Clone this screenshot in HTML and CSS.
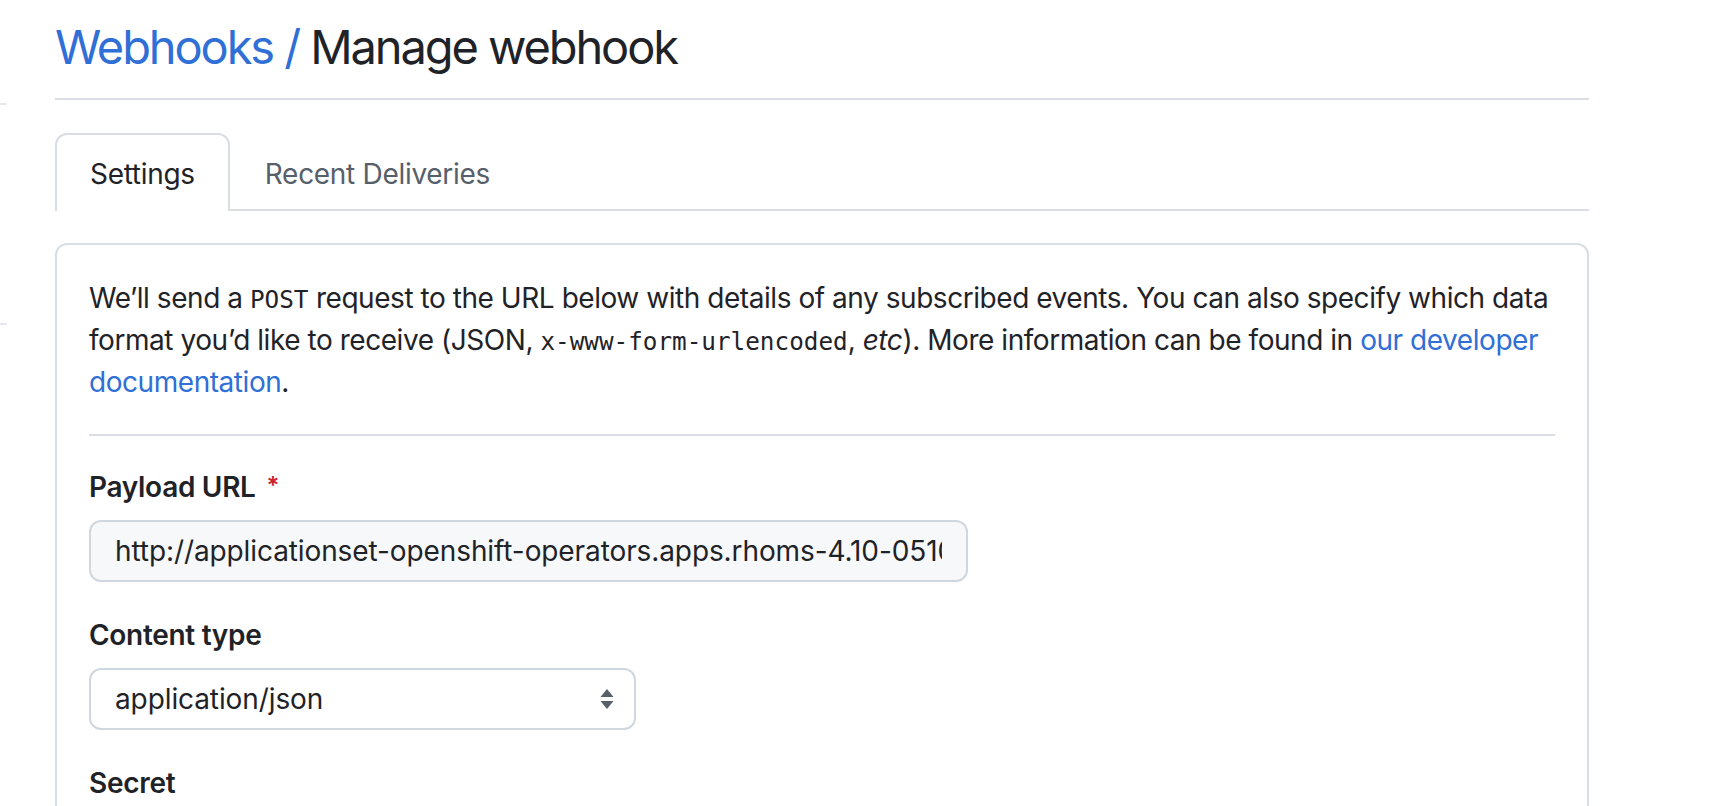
FILE: index.html
```html
<!DOCTYPE html>
<html lang="en">
<head>
<meta charset="utf-8">
<title>Manage webhook</title>
<link rel="stylesheet" href="styles.css">
</head>
<body>
<div class="page">
  <div class="side">
    <span class="side-mark mark-top"></span>
    <span class="side-mark mark-bottom"></span>
  </div>
  <main class="main">
    <div class="subhead">
      <h2 class="subhead-heading"><a class="crumb" href="#">Webhooks</a><span class="crumb-sep"> / </span>Manage webhook</h2>
    </div>
    <nav class="tabnav">
      <a class="tab tab-selected" href="#">Settings</a>
      <a class="tab" href="#">Recent Deliveries</a>
    </nav>
    <section class="box">
      <p class="intro">We’ll send a <code>POST</code> request to the URL below with details of any subscribed events. You can also specify which data format you’d like to receive (JSON, <code>x-www-form-urlencoded</code>, <em>etc</em>). More information can be found in <a href="#" class="link">our developer documentation</a>.</p>
      <hr class="divider">
      <div class="field">
        <label class="label">Payload URL <span class="req">*</span></label>
        <div class="input input-url"><span class="input-text">http://applicationset-openshift-operators.apps.rhoms-4.10-051022-aws-x.example.com/api/webhook</span></div>
      </div>
      <div class="field">
        <label class="label">Content type</label>
        <div class="input select"><span class="input-text">application/json</span>
          <svg class="select-arrows" width="16" height="24" viewBox="0 0 16 24"><path d="M8 2 L14.5 10 H1.5 Z M8 22 L1.5 14 H14.5 Z" fill="#57606a"/></svg>
        </div>
      </div>
      <div class="field">
        <label class="label">Secret</label>
      </div>
    </section>
  </main>
</div>
</body>
</html>
```
FILE: styles.css
```css
html, body {
  margin: 0;
  padding: 0;
  background: #ffffff;
  color: #1f2328;
  font-family: Inter, "Liberation Sans", Arial, sans-serif;
  overflow: hidden;
}
.page {
  display: flex;
  height: 806px;
  overflow: hidden;
}
.side {
  width: 55px;
  flex: none;
  display: flex;
  flex-direction: column;
}
.side-mark {
  display: block;
  width: 7px;
  height: 2px;
  background: #e6e9ed;
}
.mark-top { margin-top: 103px; }
.mark-bottom { margin-top: 218px; }
.main {
  width: 1534px;
  flex: none;
}
.subhead {
  border-bottom: 2px solid #d8dee4;
  padding: 17px 0 21px;
}
.subhead-heading {
  margin: 0;
  font-size: 47px;
  font-weight: 400;
  line-height: 60px;
  letter-spacing: -2.1px;
}
.crumb { color: #2f6fd6; text-decoration: none; }
.crumb-sep { color: #2f6fd6; }
.tabnav {
  margin-top: 33px;
  display: flex;
  border-bottom: 2px solid #d8dee4;
  height: 76px;
}
.tab {
  display: flex;
  align-items: center;
  padding: 2px 33px 0;
  font-size: 28px;
  letter-spacing: -0.3px;
  color: #57606a;
  text-decoration: none;
  border: 2px solid transparent;
  border-bottom: none;
  border-radius: 12px 12px 0 0;
  margin-bottom: -2px;
}
.tab-selected {
  color: #1f2328;
  border-color: #d8dee4;
  background: #ffffff;
}
.box {
  margin-top: 32px;
  border: 2px solid #d8dee4;
  border-bottom: none;
  border-radius: 12px 12px 0 0;
  padding: 32px 32px 0;
  height: 600px;
}
.intro {
  margin: 0;
  font-size: 28px;
  line-height: 42px;
  letter-spacing: -0.45px;
}
code {
  font-family: "DejaVu Sans Mono", "Liberation Mono", monospace;
  font-size: 24.3px;
  line-height: 1;
  letter-spacing: 0;
}
.link { color: #2f6fd6; text-decoration: none; }
.divider {
  margin: 31px 0 0;
  border: none;
  border-top: 2px solid #d8dee4;
  height: 0;
}
.field {
  margin-top: 30px;
}
.field + .field { margin-top: 32px; }
.label {
  display: block;
  font-size: 28px;
  line-height: 42px;
  font-weight: 600;
  letter-spacing: -0.3px;
}
.req { color: #cf222e; font-size: 24px; vertical-align: 3px; line-height: 1; margin-left: 4px; }
.input {
  margin-top: 12px;
  box-sizing: border-box;
  height: 62px;
  border: 2px solid #d0d7de;
  border-radius: 12px;
  padding: 0 24px;
  display: flex;
  align-items: center;
  font-size: 28px;
  letter-spacing: -0.1px;
  overflow: hidden;
  white-space: nowrap;
}
.input-url {
  width: 879px;
  background: #f6f8fa;
}
.input-url .input-text {
  display: block;
  overflow: hidden;
  width: 100%;
}
.select {
  width: 547px;
  background: #ffffff;
  justify-content: space-between;
  padding-right: 19px;
}
.select-arrows { flex: none; }
```
